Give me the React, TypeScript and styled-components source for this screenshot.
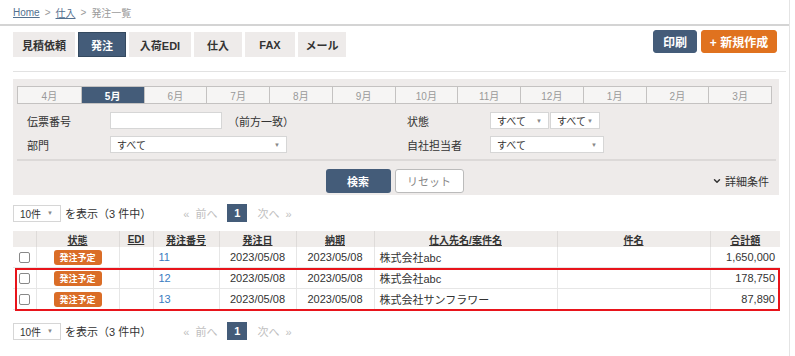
import React from 'react';
import styled, { createGlobalStyle } from 'styled-components';
import { ChevronDown } from 'lucide-react';

const GlobalStyle = createGlobalStyle`
  html, body {
    margin: 0;
    padding: 0;
    background: #fff;
  }
  body {
    font-family: "Liberation Sans", "Noto Sans CJK JP", sans-serif;
    font-size: 11px;
    color: #333;
  }
`;

const NAVY = '#445c79';
const ORANGE = '#e0721f';

const Page = styled.div`
  width: 790px;
  min-height: 356px;
  border-right: 1px solid #e4e4e4;
  box-sizing: border-box;
`;

const Breadcrumb = styled.div`
  height: 24px;
  padding-left: 13px;
  display: flex;
  align-items: center;
  gap: 5px;
  font-size: 10px;
  color: #999;
  border-bottom: 2px solid #d4d4d4;
`;

const Crumb = styled.a`
  color: #53708f;
  text-decoration: underline;
`;

const Content = styled.div`
  padding: 0 10px 0 13px;
`;

const Toolbar = styled.div`
  display: flex;
  justify-content: space-between;
  align-items: flex-start;
  padding-top: 6px;
  height: 39px;
  border-bottom: 1px solid #e2e2e2;
  margin-right: -7px;
  padding-right: 9px;
`;

const Tabs = styled.div`
  display: flex;
  gap: 3px;
`;

const Tab = styled.div<{ $active?: boolean; $w: number }>`
  width: ${(p) => p.$w}px;
  height: 25px;
  box-sizing: border-box;
  display: flex;
  align-items: center;
  justify-content: center;
  font-size: 11px;
  font-weight: bold;
  background: ${(p) => (p.$active ? NAVY : '#eeebea')};
  color: ${(p) => (p.$active ? '#fff' : '#333')};
  border: 1px solid ${(p) => (p.$active ? '#34495f' : '#eeebea')};
`;

const Actions = styled.div`
  display: flex;
  gap: 4px;
  margin-top: -2px;
`;

const ActionButton = styled.button<{ $color: string; $w: number }>`
  width: ${(p) => p.$w}px;
  height: 23px;
  border: 1px solid ${(p) => p.$color};
  border-radius: 3px;
  background: ${(p) => p.$color};
  color: #fff;
  font-family: inherit;
  font-size: 12px;
  font-weight: bold;
  padding: 0;
`;

const SearchPanel = styled.div`
  margin-top: 7px;
  background: #eeebea;
  padding: 7px 7px 2px 4px;
`;

const Months = styled.div`
  display: grid;
  grid-template-columns: repeat(12, 1fr);
  border: 1px solid #c4c2c1;
`;

const Month = styled.div<{ $active?: boolean }>`
  height: 16px;
  display: flex;
  align-items: center;
  justify-content: center;
  font-size: 10px;
  background: ${(p) => (p.$active ? NAVY : '#f6f5f4')};
  color: ${(p) => (p.$active ? '#fff' : '#999')};
  font-weight: ${(p) => (p.$active ? 'bold' : 'normal')};
  border-left: 1px solid #c4c2c1;
  &:first-child {
    border-left: none;
  }
`;

const FormGrid = styled.div`
  display: grid;
  grid-template-columns: 380px 1fr;
  row-gap: 7px;
  padding: 8px 0 6px 10px;
  border-bottom: 2px solid #dcd9d8;
  margin-right: -4px;
`;

const Field = styled.div`
  display: flex;
  align-items: center;
  height: 17px;
`;

const Label = styled.div`
  width: 83px;
  font-size: 11px;
  color: #333;
`;

const TextInput = styled.div<{ $w: number }>`
  width: ${(p) => p.$w}px;
  height: 17px;
  box-sizing: border-box;
  background: #fff;
  border: 1px solid #d6d6d6;
`;

const Hint = styled.span`
  margin-left: 6px;
  font-size: 11px;
`;

const Select = styled.div<{ $w: number }>`
  width: ${(p) => p.$w}px;
  height: 17px;
  box-sizing: border-box;
  background: #fff;
  border: 1px solid #d6d6d6;
  display: flex;
  align-items: center;
  justify-content: space-between;
  padding: 0 6px 0 6px;
  font-size: 10px;
  color: #333;
  white-space: nowrap;
  & + & {
    margin-left: 1px;
  }
`;

const Caret = styled.span`
  font-size: 6px;
  color: #888;
`;

const ButtonRow = styled.div`
  display: grid;
  grid-template-columns: 1fr auto 1fr;
  align-items: center;
  padding: 8px 0 0;
`;

const ButtonPair = styled.div`
  display: flex;
  gap: 4px;
`;

const SearchButton = styled.button`
  width: 65px;
  height: 24px;
  border: none;
  border-radius: 3px;
  background: ${NAVY};
  color: #fff;
  font-family: inherit;
  font-size: 11px;
  font-weight: bold;
`;

const ResetButton = styled.button`
  width: 69px;
  height: 24px;
  border: 1px solid #bbb;
  border-radius: 3px;
  background: #fff;
  color: #888;
  font-family: inherit;
  font-size: 11px;
`;

const Detail = styled.div`
  justify-self: end;
  display: flex;
  align-items: center;
  gap: 3px;
  padding-right: 3px;
  font-size: 11px;
  color: #333;
`;

const PagerRow = styled.div`
  display: flex;
  align-items: center;
  height: 18px;
  margin-top: 9px;
`;

const PageSize = styled(Select)`
  padding: 0 7px 0 6px;
`;

const Summary = styled.span`
  margin-left: 4px;
  font-size: 11px;
`;

const PageNav = styled.div`
  margin-left: 32px;
  display: flex;
  align-items: center;
  gap: 10px;
  color: #c0c0c0;
  font-size: 11px;
`;

const PageNum = styled.div`
  width: 20px;
  height: 18px;
  background: ${NAVY};
  color: #fff;
  font-weight: bold;
  font-size: 11px;
  display: flex;
  align-items: center;
  justify-content: center;
`;

const TableWrap = styled.div`
  position: relative;
  margin: 9px 0 12px;
`;

const Table = styled.table`
  width: 767px;
  border-collapse: collapse;
  table-layout: fixed;
  font-size: 11px;
`;

const Th = styled.th`
  height: 16px;
  padding: 0;
  background: #efecea;
  border-left: 1px solid #dedbd9;
  font-weight: bold;
  font-size: 10px;
  color: #333;
  text-decoration: underline;
  text-align: center;
  &:first-child {
    border-left: none;
  }
`;

const Td = styled.td<{ $align?: 'left' | 'center' | 'right' }>`
  height: 20px;
  padding: 0 5px;
  border-left: 1px solid #e6e6e6;
  border-bottom: 1px solid #e6e6e6;
  text-align: ${(p) => p.$align ?? 'left'};
  white-space: nowrap;
  &:first-child {
    border-left: none;
  }
`;

const Check = styled.span`
  display: block;
  width: 9px;
  height: 9px;
  margin: 0 auto;
  border: 1px solid #888;
  border-radius: 2px;
  background: #fff;
`;

const Badge = styled.span`
  display: inline-flex;
  align-items: center;
  justify-content: center;
  width: 48px;
  height: 15px;
  border-radius: 3px;
  background: #da6d27;
  color: #fff;
  font-weight: bold;
  font-size: 9px;
`;

const OrderLink = styled.a`
  color: #3a7cc2;
`;

const Highlight = styled.div`
  position: absolute;
  left: 2px;
  top: 37px;
  width: 765px;
  height: 43px;
  border: 2px solid #e8141b;
  box-sizing: border-box;
  pointer-events: none;
`;

const months = ['4月', '5月', '6月', '7月', '8月', '9月', '10月', '11月', '12月', '1月', '2月', '3月'];

const tabs = [
  { label: '見積依頼', w: 62 },
  { label: '発注', w: 48, active: true },
  { label: '入荷EDI', w: 62 },
  { label: '仕入', w: 48 },
  { label: 'FAX', w: 50 },
  { label: 'メール', w: 48 },
];

const columns = [
  { label: '', w: 23 },
  { label: '状態', w: 83 },
  { label: 'EDI', w: 34 },
  { label: '発注番号', w: 66 },
  { label: '発注日', w: 77 },
  { label: '納期', w: 78 },
  { label: '仕入先名/案件名', w: 183 },
  { label: '件名', w: 153 },
  { label: '合計額', w: 70 },
];

const orders = [
  { no: '11', date: '2023/05/08', due: '2023/05/08', supplier: '株式会社abc', total: '1,650,000' },
  { no: '12', date: '2023/05/08', due: '2023/05/08', supplier: '株式会社abc', total: '178,750' },
  { no: '13', date: '2023/05/08', due: '2023/05/08', supplier: '株式会社サンフラワー', total: '87,890' },
];

const PagerBar = () => (
  <PagerRow>
    <PageSize $w={48}>
      10件<Caret>▼</Caret>
    </PageSize>
    <Summary>を表示（3 件中）</Summary>
    <PageNav>
      <span>«&nbsp; 前へ</span>
      <PageNum>1</PageNum>
      <span>次へ &nbsp;»</span>
    </PageNav>
  </PagerRow>
);

const App = () => {
  return (
    <>
      <GlobalStyle />
      <Page>
        <Breadcrumb>
          <Crumb>Home</Crumb>
          <span>&gt;</span>
          <Crumb>仕入</Crumb>
          <span>&gt;</span>
          <span>発注一覧</span>
        </Breadcrumb>
        <Content>
          <Toolbar>
            <Tabs>
              {tabs.map((t) => (
                <Tab key={t.label} $w={t.w} $active={t.active}>
                  {t.label}
                </Tab>
              ))}
            </Tabs>
            <Actions>
              <ActionButton $color={NAVY} $w={44}>印刷</ActionButton>
              <ActionButton $color={ORANGE} $w={76}>+ 新規作成</ActionButton>
            </Actions>
          </Toolbar>

          {/* search conditions */}
          <SearchPanel>
            <Months>
              {months.map((m) => (
                <Month key={m} $active={m === '5月'}>
                  {m}
                </Month>
              ))}
            </Months>
            <FormGrid>
              <Field>
                <Label>伝票番号</Label>
                <TextInput $w={112} />
                <Hint>（前方一致）</Hint>
              </Field>
              <Field>
                <Label>状態</Label>
                <Select $w={59}>
                  すべて<Caret>▼</Caret>
                </Select>
                <Select $w={50}>
                  すべて<Caret>▼</Caret>
                </Select>
              </Field>
              <Field>
                <Label>部門</Label>
                <Select $w={177}>
                  すべて<Caret>▼</Caret>
                </Select>
              </Field>
              <Field>
                <Label>自社担当者</Label>
                <Select $w={114}>
                  すべて<Caret>▼</Caret>
                </Select>
              </Field>
            </FormGrid>
            <ButtonRow>
              <span />
              <ButtonPair>
                <SearchButton>検索</SearchButton>
                <ResetButton>リセット</ResetButton>
              </ButtonPair>
              <Detail>
                <ChevronDown size={10} strokeWidth={3.5} />
                詳細条件
              </Detail>
            </ButtonRow>
          </SearchPanel>

          <PagerBar />

          <TableWrap>
            <Table>
              <colgroup>
                {columns.map((c, i) => (
                  <col key={i} style={{ width: c.w }} />
                ))}
              </colgroup>
              <thead>
                <tr>
                  {columns.map((c, i) => (
                    <Th key={i}>{c.label}</Th>
                  ))}
                </tr>
              </thead>
              <tbody>
                {orders.map((o) => (
                  <tr key={o.no}>
                    <Td $align="center">
                      <Check />
                    </Td>
                    <Td $align="center">
                      <Badge>発注予定</Badge>
                    </Td>
                    <Td />
                    <Td>
                      <OrderLink>{o.no}</OrderLink>
                    </Td>
                    <Td $align="center">{o.date}</Td>
                    <Td $align="center">{o.due}</Td>
                    <Td>{o.supplier}</Td>
                    <Td />
                    <Td $align="right">{o.total}</Td>
                  </tr>
                ))}
              </tbody>
            </Table>
            <Highlight />
          </TableWrap>

          <PagerBar />
        </Content>
      </Page>
    </>
  );
};

export default App;
